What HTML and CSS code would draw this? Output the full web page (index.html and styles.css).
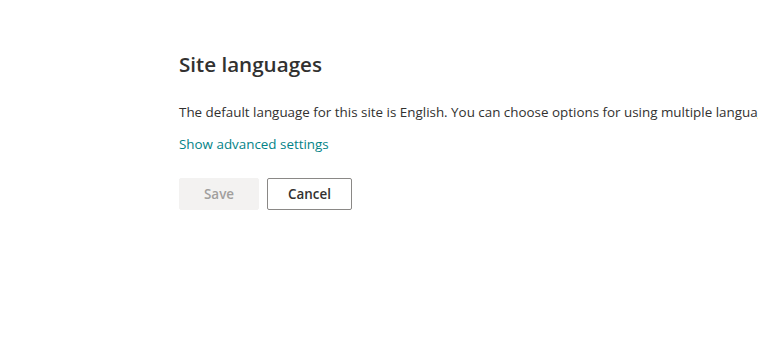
FILE: index.html
```html
<!DOCTYPE html>
<html>
<head>
  <meta charset="UTF-8">
  <title>Site languages</title>
  <link rel="stylesheet" href="styles.css">
</head>
<body>
  <div class="page">
    <h1>Site languages</h1>
    <p class="desc">The default language for this site is English. You can choose options for using multiple languages for this site.</p>
    <a href="#" class="link">Show advanced settings</a>
    <div class="actions">
      <button class="button" disabled>Save</button>
      <button class="button default">Cancel</button>
    </div>
  </div>
</body>
</html>
```

FILE: styles.css
```css
html, body {
  margin: 0;
  padding: 0;
  overflow: hidden;
  background: white;
}
body {
  font-family: "Open Sans", "Noto Sans", sans-serif;
  color: #323130;
  font-size: 13.4px;
}
.page {
  padding: 48px 0 0 179px;
  white-space: nowrap;
}
h1 {
  font-size: 20.6px;
  font-weight: 600;
  margin: 0;
  line-height: 32px;
}
.desc {
  margin: 22px 0 0;
  line-height: 20px;
}
.link {
  display: inline-block;
  margin-top: 12px;
  color: #038387;
  text-decoration: none;
  line-height: 20px;
}
.actions {
  display: flex;
  gap: 8px;
  margin-top: 24px;
}
.button {
  font-family: inherit;
  font-size: 13.4px;
  font-weight: 600;
  height: 32px;
  min-width: 80px;
  padding: 0 20px;
  border: 1px solid #8a8886;
  border-radius: 2px;
  background: white;
  color: #323130;
}
.button:disabled {
  background: #f3f2f1;
  border-color: #f3f2f1;
  color: #a19f9d;
}
```
